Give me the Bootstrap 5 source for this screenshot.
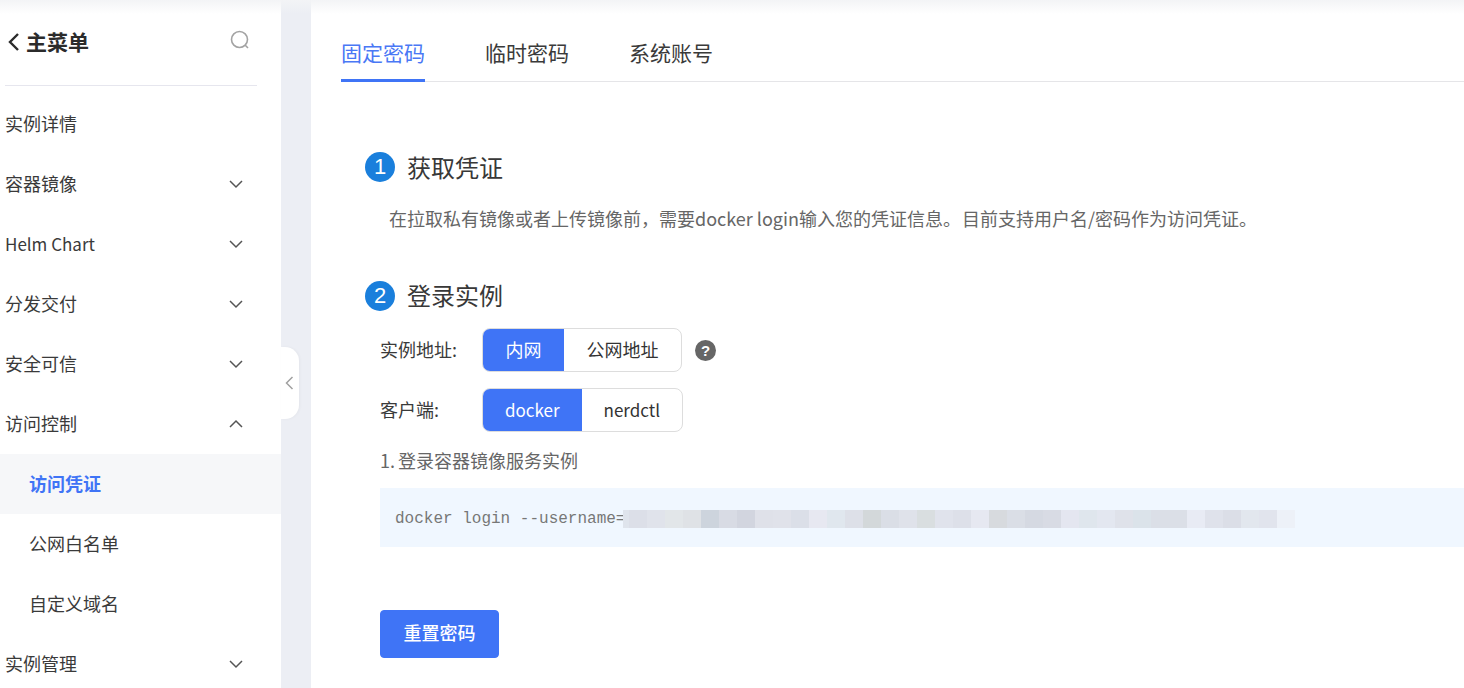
<!doctype html>
<html lang="zh">
<head>
<meta charset="utf-8">
<title>访问凭证</title>
<link rel="stylesheet" href="https://cdn.jsdelivr.net/npm/bootstrap@5.3.0/dist/css/bootstrap.min.css">
<style>
html,body{height:100%;overflow:hidden}
body{font-family:"Noto Sans CJK SC","Noto Sans",sans-serif;font-size:18px;color:#333;background:#eceef4}
.shell{height:688px;position:relative}
.topfade{position:absolute;left:0;right:0;top:0;height:14px;background:linear-gradient(#f3f4f6,rgba(255,255,255,0));z-index:3;pointer-events:none}
.side{width:281px;height:688px;background:#fff;flex:none}
.side-head{margin:0 24px 8px 5px;height:86px;padding:0 6px 5px 0;border-bottom:1px solid #e6e6ee}
.side-back{margin-top:3px}
.side-title{font-size:21px;font-weight:700;color:#2b2b2b;line-height:1}
.mitem{height:60px;padding:0 37px 2px 5px;color:#3a3a3a;font-size:18px}
.mitem svg,.mitem .latin{margin-top:2px}
.mitem.sub{padding-left:29px}
.mitem.on{background:#f6f7f9;color:#3f74f6;font-weight:700}
.latin{font-size:17px}
.gutter{width:30px;flex:none}
.handle{position:absolute;left:281px;top:347px;width:18px;height:72px;background:#fff;border-radius:0 14px 14px 0;box-shadow:1px 0 3px rgba(0,0,0,.04)}
.main{background:#fff;height:688px;min-width:0;padding-left:30px}
.tabbar{height:82px;border-bottom:1px solid #e5e5e8;gap:60px}
.tabx{height:82px;font-size:21px;color:#3a3a3a;border-bottom:3px solid transparent;margin-bottom:-1px;line-height:1;padding-top:42px}
.tabx.on{color:#4a78f5;border-bottom-color:#3f74f6}
.stepnum{width:30px;height:30px;border-radius:50%;background:#1a7fdc;color:#fff;font-size:22px;font-family:"Liberation Sans",sans-serif;line-height:30px;text-align:center;flex:none}
.steptitle{font-size:24px;color:#383838;line-height:30px}
.step{padding-left:24px;gap:12px}
.step-a{margin-top:70px}
.step-b{margin-top:51px}
.step-b .steptitle{margin-top:-2px}
.desc{margin:24px 0 0 48px;font-size:18px;color:#666;line-height:24px;white-space:nowrap}
.thin-gap{word-spacing:-3px}
.rowx{padding-left:39px;height:44px}
.row-a{margin-top:17px}
.lbl{width:102px;font-size:18px;color:#3a3a3a;flex:none;padding-bottom:2px}
.seg{height:44px;border:1px solid #ddd;border-radius:8px;overflow:hidden;background:#fff}
.seg span{height:100%;padding:0 22.5px 2px;font-size:18px;color:#333;display:flex;align-items:center}
.seg.lat span{font-size:17px;padding:0 22px}
.seg span.on{background:#3f74f6;color:#fff}
.qmark{width:21px;height:21px;border-radius:50%;background:#666;color:#fff;font:700 15px/21px "Liberation Sans",sans-serif;text-align:center;margin-left:13px}
.cmdlabel{margin:16px 0 0 39px;font-size:18px;color:#666;line-height:24px;word-spacing:-1px}
.cmdbox{margin:16px 0 0 39px;height:59px;background:#f0f7ff;padding:3px 0 0 15px}
.cmdtxt{font:16px/18px "Liberation Mono","Noto Sans CJK SC",monospace;color:#777;white-space:nowrap}
.mosaic{width:672px;height:18px;flex:none;margin-left:-2.4px;background:linear-gradient(90deg,#dfe4ec 0 6px,#dcdfe8 6px 24px,#e0e3eb 24px 42px,#e2e6e9 42px 60px,#dfe2e6 60px 78px,#cdd4dd 78px 96px,#d8dbe4 96px 114px,#d2d5df 114px 132px,#dfe1e9 132px 150px,#e0e2ea 150px 168px,#dbdfe8 168px 186px,#e7e8f1 186px 204px,#e0e7ee 204px 222px,#dde0e8 222px 240px,#d3d8da 240px 258px,#dadee6 258px 276px,#dfe2ea 276px 294px,#d9dee0 294px 312px,#e0e3ec 312px 330px,#dde0e9 330px 348px,#e6e8f1 348px 366px,#d7dade 366px 384px,#dadee6 384px 402px,#d5d9e2 402px 420px,#d8dbe4 420px 438px,#e4e6f0 438px 456px,#dfe6ed 456px 474px,#e3e7f0 474px 492px,#dfe2ea 492px 510px,#dbe3ea 510px 528px,#dbdfe7 528px 564px,#e8ebf4 564px 582px,#dfe2eb 582px 600px,#dbdee7 600px 618px,#e2e7ee 618px 636px,#e1e4ed 636px 654px,#edf1f8 654px 672px)}
.resetbtn{margin:63px 0 0 39px;width:119px;height:48px;padding:0 0 3px;background:#3f74f6;border-color:#3f74f6;border-radius:4px;font-size:18px;font-weight:500;color:#fff}
</style>
</head>
<body>
<div class="shell d-flex">
  <div class="topfade"></div>
  <aside class="side">
    <div class="side-head d-flex align-items-center justify-content-between">
      <div class="side-back d-flex align-items-center gap-1">
        <svg width="17" height="20" viewBox="0 0 17 20" fill="none" stroke="#2b2b2b" stroke-width="2.4"><path d="M13 2 5 10l8 8"/></svg>
        <span class="side-title">主菜单</span>
      </div>
      <svg width="22" height="22" viewBox="0 0 22 22" fill="none" stroke="#a3a3a3" stroke-width="1.6"><circle cx="10.5" cy="10.5" r="8"/><path d="m16 16 3 3"/></svg>
    </div>
    <div class="mitem d-flex align-items-center">实例详情</div>
    <div class="mitem d-flex align-items-center justify-content-between">容器镜像<svg width="16" height="10" viewBox="0 0 16 10" fill="none" stroke="#555" stroke-width="1.5"><path d="m2 2 6 6 6-6"/></svg></div>
    <div class="mitem d-flex align-items-center justify-content-between"><span class="latin">Helm Chart</span><svg width="16" height="10" viewBox="0 0 16 10" fill="none" stroke="#555" stroke-width="1.5"><path d="m2 2 6 6 6-6"/></svg></div>
    <div class="mitem d-flex align-items-center justify-content-between">分发交付<svg width="16" height="10" viewBox="0 0 16 10" fill="none" stroke="#555" stroke-width="1.5"><path d="m2 2 6 6 6-6"/></svg></div>
    <div class="mitem d-flex align-items-center justify-content-between">安全可信<svg width="16" height="10" viewBox="0 0 16 10" fill="none" stroke="#555" stroke-width="1.5"><path d="m2 2 6 6 6-6"/></svg></div>
    <div class="mitem d-flex align-items-center justify-content-between">访问控制<svg width="16" height="10" viewBox="0 0 16 10" fill="none" stroke="#555" stroke-width="1.5"><path d="m2 8 6-6 6 6"/></svg></div>
    <div class="mitem sub on d-flex align-items-center">访问凭证</div>
    <div class="mitem sub d-flex align-items-center">公网白名单</div>
    <div class="mitem sub d-flex align-items-center">自定义域名</div>
    <div class="mitem d-flex align-items-center justify-content-between">实例管理<svg width="16" height="10" viewBox="0 0 16 10" fill="none" stroke="#555" stroke-width="1.5"><path d="m2 2 6 6 6-6"/></svg></div>
  </aside>
  <div class="gutter"></div>
  <div class="handle d-flex align-items-center"><svg class="ms-1" width="9" height="16" viewBox="0 0 9 16" fill="none" stroke="#a0a0a0" stroke-width="1.5"><path d="M7.5 2 1.5 8l6 6"/></svg></div>
  <main class="main flex-grow-1">
    <div class="tabbar d-flex">
      <div class="tabx on">固定密码</div>
      <div class="tabx">临时密码</div>
      <div class="tabx">系统账号</div>
    </div>
    <div class="step step-a d-flex align-items-center"><div class="stepnum">1</div><div class="steptitle">获取凭证</div></div>
    <p class="desc">在拉取私有镜像或者上传镜像前，需要docker login输入您的凭证信息。<span class="thin-gap"> </span>目前支持用户名/密码作为访问凭证。</p>
    <div class="step step-b d-flex align-items-center"><div class="stepnum">2</div><div class="steptitle">登录实例</div></div>
    <div class="rowx row-a d-flex align-items-center">
      <div class="lbl">实例地址:</div>
      <div class="seg d-flex"><span class="on">内网</span><span>公网地址</span></div>
      <div class="qmark">?</div>
    </div>
    <div class="rowx d-flex align-items-center mt-3">
      <div class="lbl">客户端:</div>
      <div class="seg lat d-flex"><span class="on">docker</span><span>nerdctl</span></div>
    </div>
    <div class="cmdlabel">1. 登录容器镜像服务实例</div>
    <div class="cmdbox d-flex align-items-center"><span class="cmdtxt">docker login --username=</span><span class="mosaic"></span></div>
    <button class="btn resetbtn" type="button">重置密码</button>
  </main>
</div>
<script src="https://cdn.jsdelivr.net/npm/bootstrap@5.3.0/dist/js/bootstrap.bundle.min.js"></script>
</body>
</html>
